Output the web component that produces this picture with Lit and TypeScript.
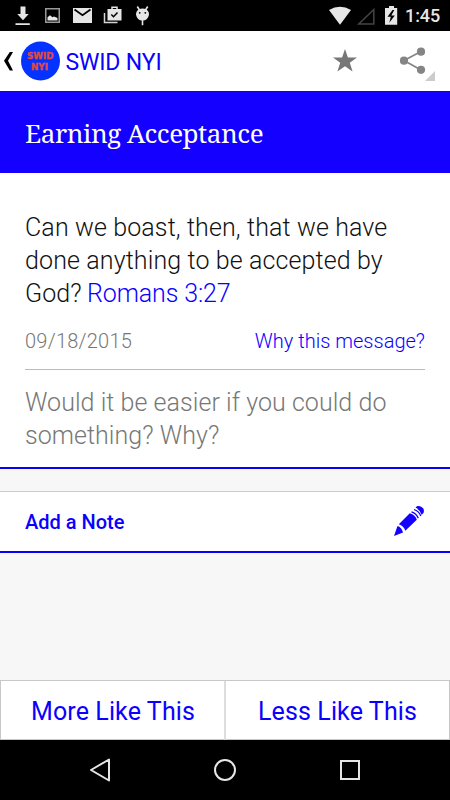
import { LitElement, html, css } from "lit";
import { customElement } from "lit/decorators.js";

@customElement("status-bar")
class StatusBar extends LitElement {
  static styles = css`
    :host { display: block; height: 31px; background: #000; }
    .bar { display: flex; height: 31px; justify-content: space-between; }
    svg { display: block; flex: none; }
    .right { display: flex; }
    .time { font: 500 18px/32px Roboto, sans-serif; color: #e6e6e6; width: 45px; white-space: nowrap; letter-spacing: -0.1px; }
  `;
  render() {
    return html`<div class="bar">
      <svg width="160" height="31" viewBox="0 0 160 31" fill="#e6e6e6">
        <path d="M20.500 6.500h5V14h3.200L23 20.300 17.300 14h3.200zM15.500 23.200h14.300V25H15.500z"/>
        <path d="M45 8h15v15H45zM46.500 9.500v12h12v-12z" fill="#999" fill-rule="evenodd"/>
        <path d="M47.500 20.500v-3.300l2.500-2 2.500 2 1.500-.7 3.500 1.500v2.500z"/>
        <path d="M73 8h19v15H73z"/><path d="M74.500 9.500l8 5.700 8-5.700" fill="none" stroke="#000" stroke-width="1.800"/>
        <path d="M104.500 13v9.500h13" fill="none" stroke="#d5d5d5" stroke-width="1.500"/>
        <path d="M107.500 9h14v11.500h-14z"/><path d="M112 9V7.200h5V9" fill="none" stroke="#e6e6e6" stroke-width="1.500"/>
        <path d="M111.300 14.500l2.200 2.200 4-4.200" fill="none" stroke="#000" stroke-width="1.500"/>
        <path d="M139 9.300Q142.500 7.600 146 9.300Q149 11 149 14.500Q148 20.500 142.500 20.500Q137 20.500 136 14.500Q136 11 139 9.300z"/>
        <path d="M139.500 10L137.300 6.500M145.500 10l2.200-3.500M142.500 20v5.200" stroke="#e6e6e6" stroke-width="1.600"/>
        <circle cx="139.700" cy="12.800" r=".9" fill="#000"/><circle cx="145.300" cy="12.800" r=".9" fill="#000"/>
      </svg>
      <div class="right">
        <svg width="81" height="31" viewBox="324 0 81 31" fill="#e6e6e6">
          <path d="M329 10Q340 3.500 351 10L340 24.700z"/>
          <path d="M373.800 9.500v14.400h-15z" fill="none" stroke="#444" stroke-width="1.500"/>
          <path d="M385 8h4V6h5v2h3.200v16.800H385z"/>
          <path d="M392.500 10l-5 6.800h3.300l-1.500 6 5.500-7.300h-3.500l3-5.500z" fill="#000"/>
        </svg>
        <div class="time">1:45</div>
      </div>
    </div>`;
  }
}

@customElement("app-header")
class AppHeader extends LitElement {
  static styles = css`
    :host { display: block; background: #fff; }
    .bar { display: flex; height: 60px; align-items: stretch; }
    svg { display: block; flex: none; }
    .name { flex: 1; font: 400 23px/63px Roboto, sans-serif; color: #0a00ff; padding-left: 4.5px; letter-spacing: -0.15px; }
    .logo { font: 700 9px "DejaVu Sans", sans-serif; stroke: #e4473d; stroke-width: 0.4; }
  `;
  render() {
    return html`<div class="bar">
      <svg width="61" height="60" viewBox="0 31 61 60">
        <path d="M13 52h-3.200L4 60.800l5.800 9.700H13L8 60.800z" fill="#000"/>
        <circle cx="40.500" cy="61" r="19.500" fill="#0433ff"/>
        <text class="logo" x="27" y="59.300" textLength="26.500" lengthAdjust="spacingAndGlyphs" fill="#e4473d">SWID</text>
        <text class="logo" x="31" y="69.800" textLength="17" lengthAdjust="spacingAndGlyphs" fill="#e4473d">NYI</text>
      </svg>
      <div class="name">SWID NYI</div>
      <svg width="130" height="60" viewBox="320 31 130 60" fill="#777">
        <path d="M345 49l2.900 8.400h9.100l-7.200 5.400 2.800 8.700-7.600-5.300-7.600 5.300 2.800-8.700-7.200-5.400h9.100z"/>
        <path d="M421 51.500L404 60.500l17 9.500" fill="none" stroke="#858585" stroke-width="1.700"/>
        <g fill="#858585"><circle cx="421" cy="51.700" r="4.100"/><circle cx="404" cy="60.700" r="4.100"/><circle cx="421" cy="69.800" r="4.100"/></g>
        <path d="M435 71v10h-10z" fill="#ccc"/>
      </svg>
    </div>`;
  }
}

@customElement("app-root")
class AppRoot extends LitElement {
  static styles = css`
    :host { display: block; width: 450px; height: 800px; overflow: hidden; background: #f7f7f7; font-family: Roboto, sans-serif; font-weight: 300; }
    .screen { display: flex; flex-direction: column; height: 800px; }
    svg { display: block; flex: none; }
    .title { box-sizing: border-box; height: 82px; background: #1400ff; color: #fff; padding: 0 25px; font: 400 26px/82px "Noto Serif", "Droid Serif", "DejaVu Serif Condensed", "DejaVu Serif", serif; font-stretch: condensed; letter-spacing: -0.45px; white-space: nowrap; border-top: 1px solid #1400d8; }
    .card { box-sizing: border-box; height: 296px; background: #fff; border-bottom: 2px solid #0a00f5; padding: 38px 25px 0; }
    .text { font-size: 25px; line-height: 33px; color: #111; white-space: nowrap; letter-spacing: 0.12px; }
    .link { color: #0a00ff; letter-spacing: 0.02px; }
    .verse { margin-left: -1px; letter-spacing: -0.12px; }
    .meta { display: flex; justify-content: space-between; box-sizing: border-box; height: 60px; border-bottom: 1px solid #bbb; font-size: 20px; line-height: 63px; color: #777; letter-spacing: 0.25px; }
    .question { color: #777; padding-top: 16px; letter-spacing: 0.05px; }
    .note { display: flex; justify-content: space-between; box-sizing: border-box; height: 62px; margin-top: 22px; background: #fff; border-top: 1px solid #ccc; border-bottom: 2px solid #0a00f5; padding: 0 25px; font-size: 20px; font-weight: 500; line-height: 61px; color: #0a00ff; }
    .buttons { display: grid; grid-template-columns: 1fr 1fr; box-sizing: border-box; height: 60px; margin-top: auto; background: #fff; border: 1px solid #c8c8c8; }
    .button { text-align: center; font-size: 25px; font-weight: 400; line-height: 61px; letter-spacing: 0.12px; color: #0a00ff; }
    .button + .button { border-left: 2px solid #ddd; margin-left: -1px; }
    .nav { height: 60px; background: #000; }
  `;
  render() {
    return html`<div class="screen">
      <status-bar></status-bar>
      <app-header></app-header>
      <div class="title">Earning Acceptance</div>
      <div class="card">
        <div class="text">Can we boast, then, that we have<br>done anything to be accepted by<br>God? <span class="link verse">Romans 3:27</span></div>
        <div class="meta"><span>09/18/2015</span><span class="link">Why this message?</span></div>
        <div class="text question">Would it be easier if you could do<br>something? Why?</div>
      </div>
      <div class="note"><span>Add a Note</span>
        <svg width="32" height="58" viewBox="393 492 32 58" fill="#1400ff">
          <path d="M394 536l3.500-10q4 1 5.500 6.500z"/>
          <path d="M398.800 524.300l11-11q5.500 1.500 7 6.500l-11.500 11q-1.500-5-6.500-6.500z"/>
          <path d="M411.500 511.800q5 1.500 6.800 6.500M414 509.500q5 1.500 6.800 6.500" fill="none" stroke="#1400ff" stroke-width="1.300"/>
          <path d="M415.500 507.500q2.500-2.500 6-.5t2 6l-2 1.800q-1.500-5-6-7.300z"/>
        </svg>
      </div>
      <div class="buttons"><div class="button">More Like This</div><div class="button">Less Like This</div></div>
      <div class="nav"><svg width="450" height="60" viewBox="0 740 450 60" fill="none" stroke="#e6e6e6" stroke-width="2">
        <path d="M109 759.500v21L91 770z" stroke-linejoin="round"/>
        <circle cx="225" cy="770" r="10"/>
        <rect x="341" y="761" width="18" height="18"/>
      </svg></div>
    </div>`;
  }
}
